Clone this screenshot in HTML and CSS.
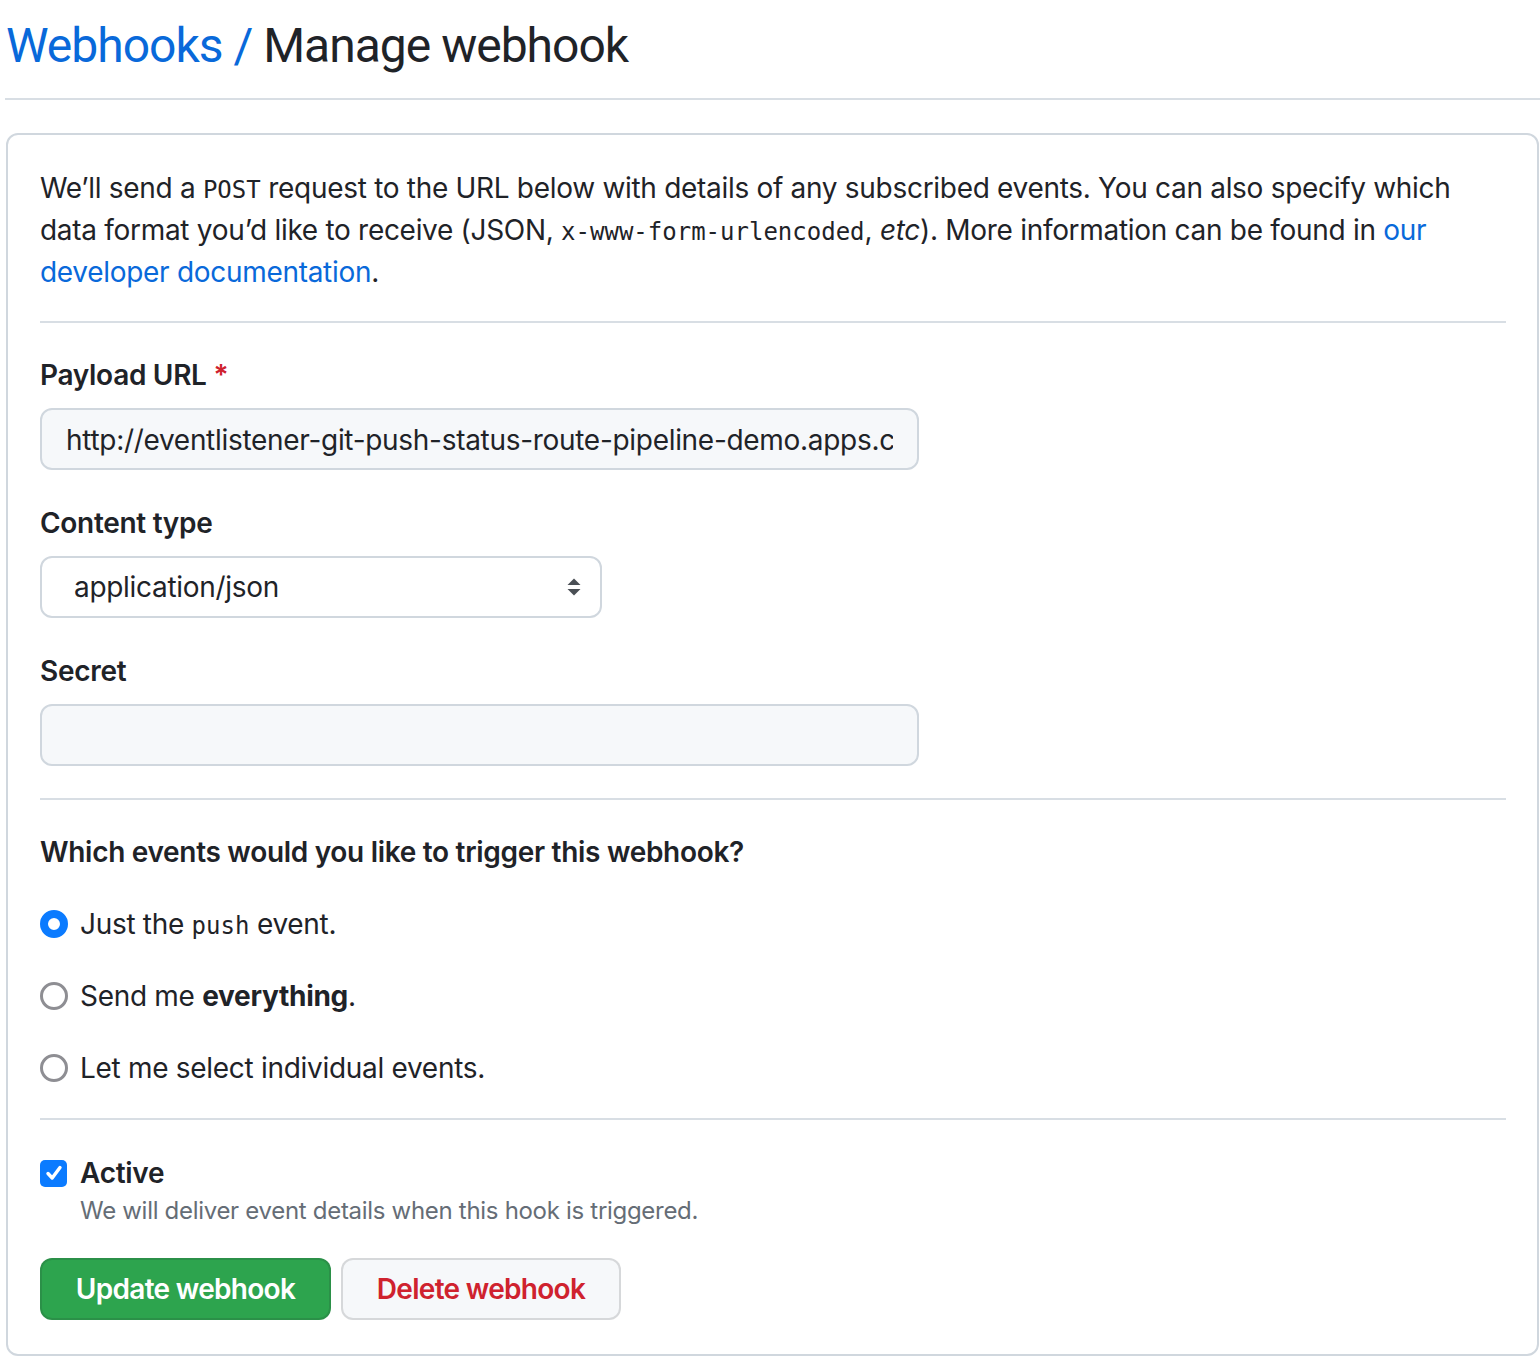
FILE: index.html
```html
<!DOCTYPE html>
<html>
<head>
<meta charset="utf-8">
<link rel="stylesheet" href="styles.css">
</head>
<body>
<div class="page">
  <div class="subhead">
    <h1 class="subhead-heading"><a class="crumb" href="#">Webhooks</a> <span class="sep">/</span> Manage webhook</h1>
  </div>
  <form class="box">
    <p class="intro">We’ll send a <code>POST</code> request to the URL below with details of any subscribed events. You can also specify which data format you’d like to receive (JSON, <code>x-www-form-urlencoded</code>, <em>etc</em>). More information can be found in <a href="#">our developer documentation</a>.</p>
    <hr class="divider">
    <div class="field">
      <label class="label">Payload URL <span class="req">*</span></label>
      <div class="input input-wide input-gray"><span class="input-text">http://eventlistener-git-push-status-route-pipeline-demo.apps.cluster-example.com</span></div>
    </div>
    <div class="field">
      <label class="label">Content type</label>
      <div class="input select">
        <span>application/json</span>
        <svg class="arrows" width="16" height="20" viewBox="0 0 16 20"><path d="M8 1.5 L14.5 8 L1.5 8 Z" fill="#4a4f55"/><path d="M8 18.5 L14.5 12 L1.5 12 Z" fill="#4a4f55"/></svg>
      </div>
    </div>
    <div class="field">
      <label class="label">Secret</label>
      <div class="input input-wide input-gray"></div>
    </div>
    <hr class="divider div2">
    <h3 class="events-title">Which events would you like to trigger this webhook?</h3>
    <div class="radios">
      <div class="radio-row"><span class="radio checked"></span><span>Just the <code class="push">push</code> event.</span></div>
      <div class="radio-row"><span class="radio"></span><span>Send me <strong>everything</strong>.</span></div>
      <div class="radio-row"><span class="radio"></span><span>Let me select individual events.</span></div>
    </div>
    <hr class="divider div3">
    <div class="active">
      <div class="check-row">
        <span class="checkbox"><svg width="22" height="22" viewBox="0 0 22 22"><path d="M5 11.5 L9.2 16 L17 5.5" fill="none" stroke="#fff" stroke-width="3.4" stroke-linecap="round" stroke-linejoin="round"/></svg></span>
        <span class="active-label">Active</span>
      </div>
      <p class="note">We will deliver event details when this hook is triggered.</p>
    </div>
    <div class="buttons">
      <button type="button" class="btn btn-primary">Update webhook</button>
      <button type="button" class="btn btn-danger">Delete webhook</button>
    </div>
  </form>
</div>
</body>
</html>
```
FILE: styles.css
```css
* { box-sizing: border-box; }
html, body { margin: 0; padding: 0; background: #ffffff; }
body {
  font-family: Inter, "Noto Sans", "Liberation Sans", sans-serif;
  color: #1f2328;
  font-size: 28px;
  line-height: 1.5;
  letter-spacing: -0.3px;
}
.page {
  padding: 10px 0 0 5px;
  width: 1540px;
}
.subhead {
  border-bottom: 2px solid #d8dee4;
  padding-bottom: 16px;
}
.subhead-heading {
  margin: 0;
  font-family: Roboto, Inter, sans-serif;
  font-size: 48px;
  font-weight: 400;
  line-height: 72px;
  padding-left: 1px;
  letter-spacing: -1px;
}
.crumb { color: #0969da; text-decoration: none; }
.sep { color: #0969da; }
a { color: #0969da; text-decoration: none; }
.box {
  margin-top: 33px;
  margin-left: 1px;
  width: 1533px;
  border: 2px solid #d0d7de;
  border-radius: 12px;
  padding: 32px 31px 34px 32px;
}
.intro { margin: 0; }
code {
  font-family: "DejaVu Sans Mono", "Liberation Mono", monospace;
  font-size: 24px;
  letter-spacing: 0;
}
.divider {
  border: 0;
  border-top: 2px solid #d8dee4;
  margin: 28px 0 31px;
  height: 0;
}
.field { margin-bottom: 32px; }
.field:last-of-type { margin-bottom: 0; }
.label {
  display: block;
  font-weight: 600;
  margin-bottom: 12px;
}
.req { color: #cf222e; }
.input {
  height: 62px;
  border: 2px solid #d0d7de;
  border-radius: 12px;
  padding: 0 24px;
  font-size: 28px;
  line-height: 58px;
  white-space: nowrap;
  color: #1f2328;
}
.input-text {
  display: block;
  overflow: hidden;
  white-space: nowrap;
  line-height: 60px;
}
.input-wide { width: 879px; }
.input-gray { background: #f6f8fa; }
.select {
  width: 562px;
  background: #fff;
  padding-left: 32px;
  padding-right: 16px;
  display: flex;
  align-items: center;
  justify-content: space-between;
}
.arrows { display: block; margin-right: 2px; }
.div2 { margin: 30px 0 31px; }
.events-title {
  margin: 0 0 30px;
  font-size: 28px;
  font-weight: 600;
  line-height: 42px;
}
.radios { display: flex; flex-direction: column; gap: 30px; }
.radio-row {
  display: flex;
  align-items: center;
  gap: 12px;
  height: 42px;
}
.radio {
  width: 28px;
  height: 28px;
  border-radius: 50%;
  border: 3.5px solid #8e8e93;
  flex: none;
  background: #fff;
}
.radio.checked {
  border: 8px solid #0b7bff;
  background: #fff;
}
.push { font-size: 24px; }
.div3 { margin: 29px 0 32px; }
.check-row { display: flex; align-items: center; gap: 13px; height: 42px; }
.checkbox {
  width: 27px;
  height: 27px;
  border-radius: 5px;
  background: #0b7bff;
  display: flex;
  align-items: center;
  justify-content: center;
  flex: none;
}
.checkbox svg { display: block; }
.active-label { font-weight: 600; }
.note {
  margin: -1px 0 0 40px;
  font-size: 24px;
  line-height: 36px;
  color: #656d76;
}
.buttons { display: flex; gap: 10px; margin-top: 29px; }
.btn {
  height: 62px;
  padding: 0;
  font-family: inherit;
  font-size: 28px;
  font-weight: 600;
  letter-spacing: -0.7px;
  white-space: nowrap;
  border-radius: 12px;
  border: 2px solid rgba(31,35,40,0.15);
  cursor: pointer;
}
.btn-primary {
  background: #2da44e;
  color: #fff;
  width: 291px;
}
.btn-danger {
  background: #f6f8fa;
  color: #cf222e;
  width: 280px;
}
```
